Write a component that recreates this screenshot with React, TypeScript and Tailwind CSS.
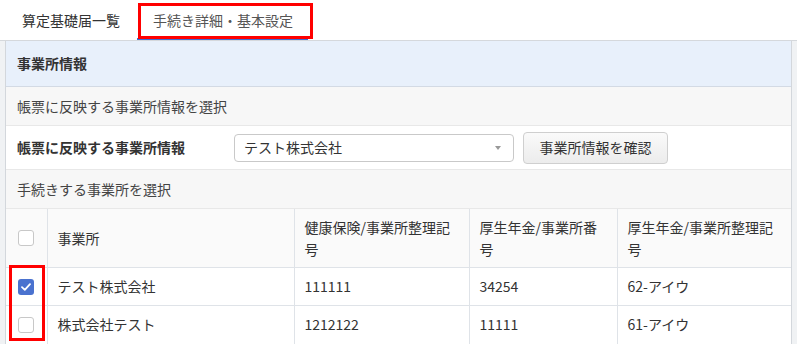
import React from "react";

const Checkbox = ({ checked = false }: { checked?: boolean }) =>
  checked ? (
    <span className="flex h-[16px] w-[16px] items-center justify-center rounded-[3px] bg-[#4a72cf]">
      <svg width="10" height="8" viewBox="0 0 10 8">
        <path d="M1 4.2 L3.8 6.8 L9 1.2" fill="none" stroke="#fff" strokeWidth="1.8" strokeLinecap="round" strokeLinejoin="round" />
      </svg>
    </span>
  ) : (
    <span className="block h-[16px] w-[16px] rounded-[3px] border border-[#c8c8c8] bg-white" />
  );

export default function App() {
  const rows = [
    { checked: true, name: "テスト株式会社", a: "111111", b: "34254", c: "62-アイウ" },
    { checked: false, name: "株式会社テスト", a: "1212122", b: "11111", c: "61-アイウ" },
  ];
  return (
    <div className="h-[345px] w-[797px] overflow-hidden bg-white font-['Noto_Sans_CJK_JP','Noto_Sans',sans-serif] text-[14px] text-[#333]">
      {/* tabs */}
      <div className="flex h-[40px] items-stretch">
        <div className="flex items-center pl-[22px] pr-[18px] text-[#333]">算定基礎届一覧</div>
        <div className="relative flex w-[175px] items-center pl-[15px] text-[#555]">
          手続き詳細・基本設定
          <div className="absolute bottom-0 left-[-1px] h-[2px] w-[171px] bg-[#3b6fd6]" />
          <div className="pointer-events-none absolute left-0 top-[3px] h-[36px] w-[175px] border-[3px] border-[#ff0000]" />
        </div>
      </div>
      {/* panel */}
      <div className="border-t border-[#d5d8dc] bg-[#f0f2f4] pl-[5px] pr-[5px]">
        <div className="border-l border-r border-[#d3d7dc] bg-white">
          <div className="flex h-[46px] items-center border-b border-[#d3dae4] bg-[#e8f0fb] pl-[11px] font-bold text-[#333]">
            事業所情報
          </div>
          <div className="flex h-[39px] items-center border-b border-[#e8e8e8] bg-[#f7f7f7] pl-[11px] text-[#444]">
            帳票に反映する事業所情報を選択
          </div>
          <div className="flex h-[44px] items-center border-b border-[#e8e8e8] bg-white pl-[11px]">
            <div className="w-[217px] font-bold text-[#333]">帳票に反映する事業所情報</div>
            <div className="flex h-[28px] w-[280px] items-center justify-between rounded-[4px] border border-[#c9c9c9] bg-white pl-[9px] pr-[12px]">
              <span>テスト株式会社</span>
              <span className="h-0 w-0 border-l-[3px] border-r-[3px] border-t-[4px] border-l-transparent border-r-transparent border-t-[#999]" />
            </div>
            <div className="ml-[9px] flex h-[32px] w-[145px] items-center justify-center rounded-[4px] border border-[#cfcfcf] bg-gradient-to-b from-[#fafafa] to-[#ececec] text-[#333]">
              事業所情報を確認
            </div>
          </div>
          <div className="flex h-[39px] items-center border-b border-[#e8e8e8] bg-[#f7f7f7] pl-[11px] text-[#444]">
            手続きする事業所を選択
          </div>
          <div className="relative">
            <table className="w-full border-collapse">
              <colgroup>
                <col className="w-[41px]" />
                <col className="w-[247px]" />
                <col className="w-[175px]" />
                <col className="w-[148px]" />
                <col />
              </colgroup>
              <thead>
                <tr className="h-[58px] bg-[#fafafa] text-left align-middle">
                  <th className="border-r border-[#dfe3e8] p-0 font-normal">
                    <div className="flex justify-center"><Checkbox /></div>
                  </th>
                  <th className="border-r border-[#dfe3e8] px-[10px] py-[7px] font-normal leading-[22px]">事業所</th>
                  <th className="border-r border-[#dfe3e8] px-[10px] py-[7px] font-normal leading-[22px]">健康保険/事業所整理記号</th>
                  <th className="border-r border-[#dfe3e8] px-[10px] py-[7px] font-normal leading-[22px]">厚生年金/事業所番号</th>
                  <th className="px-[10px] py-[7px] font-normal leading-[22px]">厚生年金/事業所整理記号</th>
                </tr>
              </thead>
              <tbody>
                {rows.map((r, i) => (
                  <tr key={i} className="h-[38px] border-t border-[#dfe3e8] bg-white">
                    <td className="border-r border-[#dfe3e8] p-0">
                      <div className="flex justify-center"><Checkbox checked={r.checked} /></div>
                    </td>
                    <td className="border-r border-[#dfe3e8] px-[10px]">{r.name}</td>
                    <td className="border-r border-[#dfe3e8] px-[10px]">{r.a}</td>
                    <td className="border-r border-[#dfe3e8] px-[10px]">{r.b}</td>
                    <td className="px-[10px]">{r.c}</td>
                  </tr>
                ))}
              </tbody>
            </table>
            <div className="pointer-events-none absolute left-[3px] top-[56px] h-[76px] w-[36px] border-[3px] border-[#ff0000]" />
          </div>
        </div>
      </div>
    </div>
  );
}
